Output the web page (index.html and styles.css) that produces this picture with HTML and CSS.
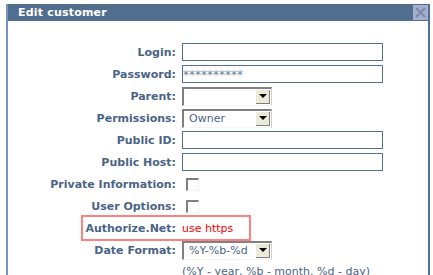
FILE: index.html
```
<!DOCTYPE html>
<html lang="en">
<head>
    <meta charset="UTF-8">
    <title>Edit customer</title>
    <link rel="stylesheet" href="styles.css">
</head>
<body>
    <div class="dialog">
        <div class="titlebar">
            <span class="title">Edit customer</span>
            <span class="close">
                <svg width="15" height="15" viewBox="0 0 15 15"><path d="M3 3 L12 12 M12 3 L3 12" stroke="#7b88a7" stroke-width="2"/></svg>
            </span>
        </div>
        <div class="form">
            <div class="row">
                <label>Login:</label>
                <span class="text-input"></span>
            </div>
            <div class="row">
                <label>Password:</label>
                <span class="text-input pass">**********</span>
            </div>
            <div class="row">
                <label>Parent:</label>
                <span class="select"><span class="value"></span><span class="arrow"></span></span>
            </div>
            <div class="row">
                <label>Permissions:</label>
                <span class="select"><span class="value">Owner</span><span class="arrow"></span></span>
            </div>
            <div class="row">
                <label>Public ID:</label>
                <span class="text-input"></span>
            </div>
            <div class="row">
                <label>Public Host:</label>
                <span class="text-input"></span>
            </div>
            <div class="row">
                <label>Private Information:</label>
                <span class="checkbox"></span>
            </div>
            <div class="row">
                <label>User Options:</label>
                <span class="checkbox"></span>
            </div>
            <div class="row">
                <div class="highlight">
                    <label>Authorize.Net:</label>
                    <span class="warn">use https</span>
                </div>
            </div>
            <div class="row">
                <label>Date Format:</label>
                <span class="select"><span class="value">%Y-%b-%d</span><span class="arrow"></span></span>
            </div>
            <div class="row hint-row">
                <label></label>
                <span class="hint">(%Y - year, %b - month, %d - day)</span>
            </div>
        </div>
    </div>
</body>
</html>
```
FILE: styles.css
```
body {
    margin: 0;
    background: #fff;
    font-family: 'DejaVu Sans', Verdana, sans-serif;
    font-size: 11px;
    color: #4b6486;
}
.dialog {
    margin: 4px 0 0 6px;
    width: 420px;
    height: 290px;
    border-left: 2px solid #7d95b4;
    border-right: 2px solid #53708f;
}
.titlebar {
    height: 17px;
    background: #526e8f;
    display: flex;
    align-items: center;
    justify-content: space-between;
}
.title {
    color: #fff;
    font-weight: bold;
    padding-left: 10px;
    letter-spacing: 0.2px;
}
.close {
    width: 15px;
    height: 15px;
    background: #a3b0cd;
    display: flex;
}
.form {
    padding-top: 20px;
}
.row {
    display: flex;
    align-items: center;
    height: 22px;
}
.row label {
    width: 168px;
    flex: none;
    text-align: right;
    font-weight: bold;
    margin-right: 6px;
}
.text-input {
    box-sizing: border-box;
    width: 201px;
    height: 18px;
    border: 1px solid #52708f;
    background: #fff;
    line-height: 18px;
}
.pass {
    font-size: 12px;
    color: #6a83a3;
}
.select {
    box-sizing: border-box;
    width: 90px;
    height: 19px;
    display: flex;
    align-items: center;
    border-top: 2px solid #808080;
    border-left: 2px solid #808080;
    border-right: 1px solid #d4d0c8;
    border-bottom: 1px solid #f4f4f4;
    background: #fff;
}
.select .value {
    flex: 1;
    padding-left: 5px;
}
.arrow {
    width: 14px;
    height: 14px;
    margin-right: 1px;
    box-sizing: border-box;
    background: #ece9d8;
    border-right: 1px solid #808080;
    border-bottom: 1px solid #808080;
    display: flex;
    align-items: center;
    justify-content: center;
}
.arrow::after {
    content: "";
    border-left: 4px solid transparent;
    border-right: 4px solid transparent;
    border-top: 4px solid #000;
}
.checkbox {
    box-sizing: border-box;
    width: 13px;
    height: 13px;
    margin-left: 4px;
    border-top: 2px solid #808080;
    border-left: 2px solid #808080;
    border-right: 1px solid #f0f0f0;
    border-bottom: 1px solid #f0f0f0;
}
.highlight {
    display: flex;
    align-items: center;
    margin-left: 73px;
    width: 166px;
    height: 22px;
    border: 2px solid #ff8080;
}
.highlight label {
    width: 93px;
}
.warn {
    color: #ff0000;
}
.hint-row {
    align-items: flex-start;
    padding-top: 4px;
}
.hint {
    white-space: nowrap;
}
```
